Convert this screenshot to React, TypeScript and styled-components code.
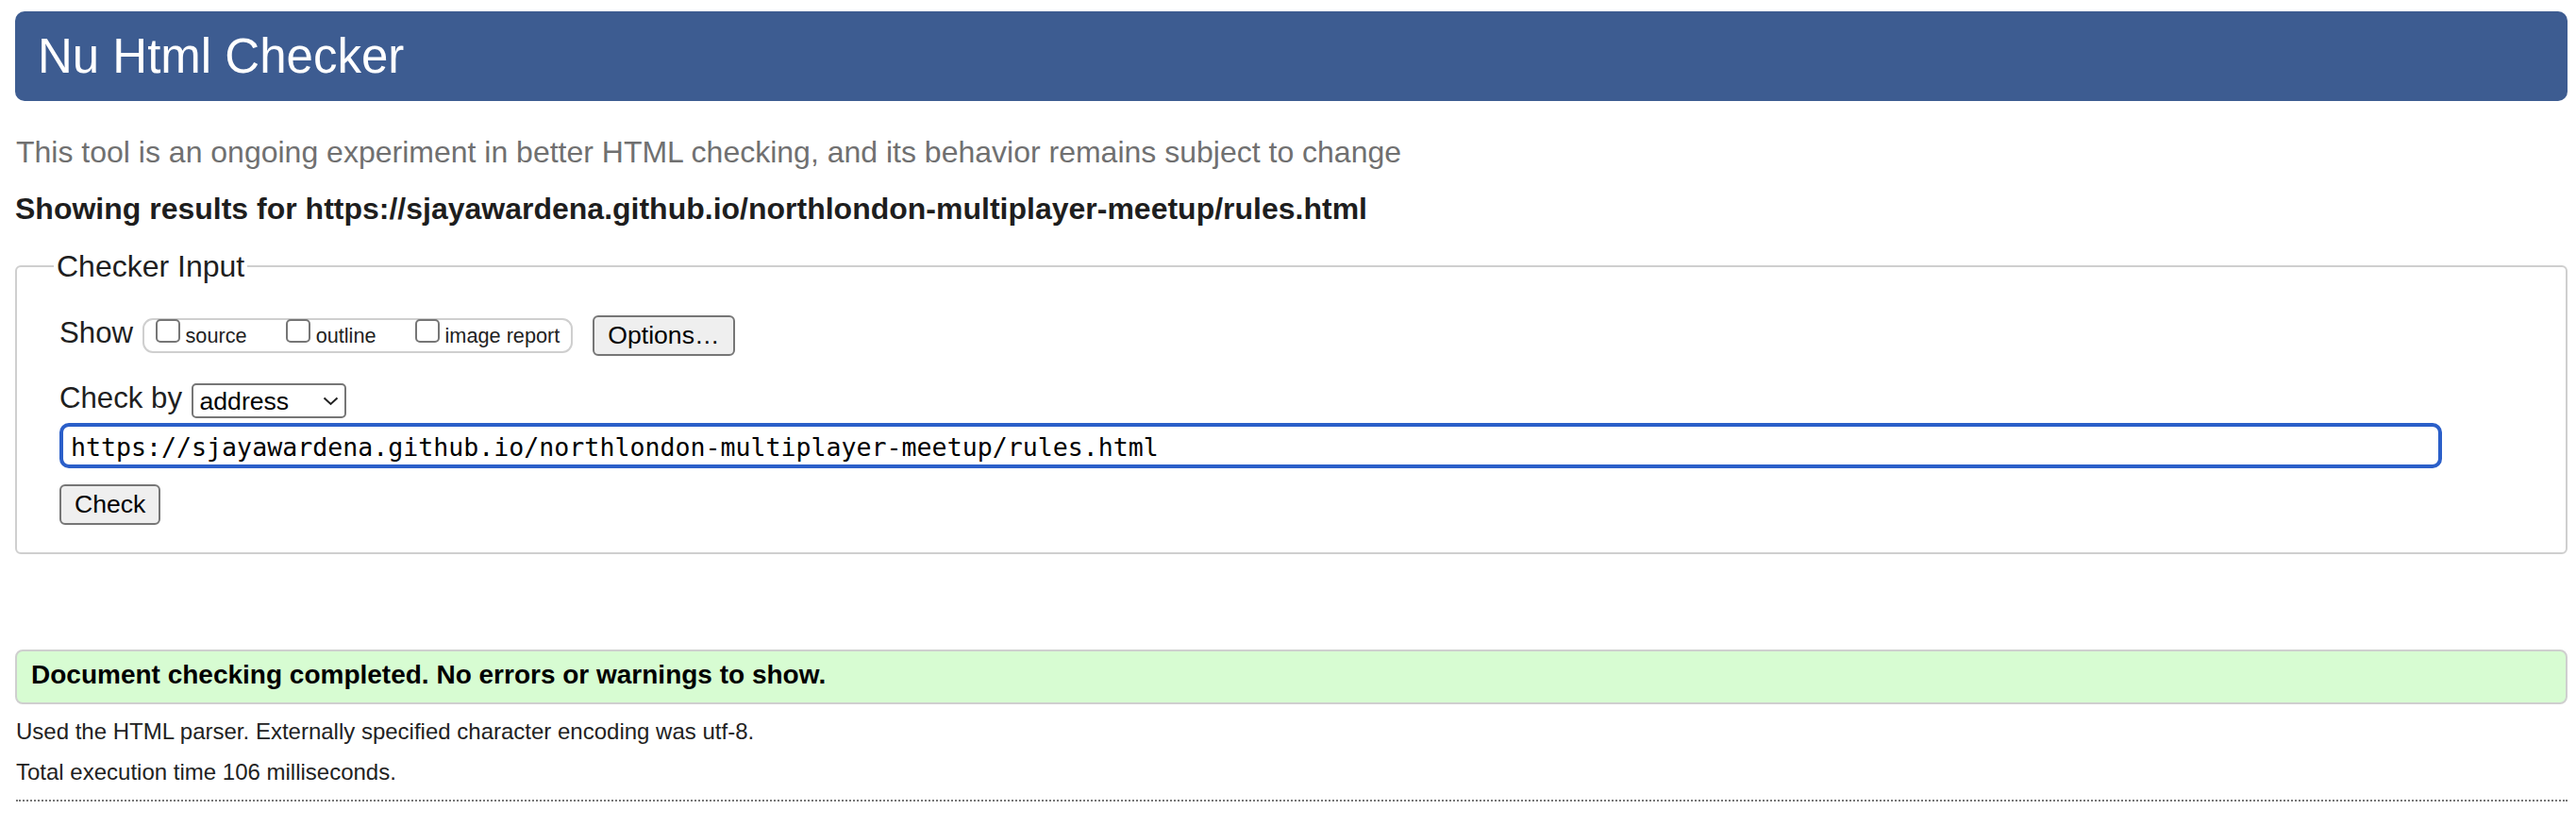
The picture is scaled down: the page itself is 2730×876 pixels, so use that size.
import React from "react";
import styled, { createGlobalStyle } from "styled-components";

const GlobalStyle = createGlobalStyle`
  html, body {
    margin: 0;
    padding: 0;
    background: #ffffff;
  }
  body {
    font-family: "Liberation Sans", Arial, Helvetica, sans-serif;
    color: #222222;
  }
`;

const Page = styled.div`
  padding: 12px 9px 0 16px;
`;

const Banner = styled.header`
  height: 95px;
  box-sizing: border-box;
  background: #3d5c91;
  border-radius: 10px;
  padding-left: 24px;
  display: flex;
  align-items: center;
`;

const Title = styled.h1`
  margin: 0;
  font-size: 51px;
  line-height: 95px;
  font-weight: 400;
  color: #ffffff;
`;

const Intro = styled.p`
  margin: 35px 0 0 1px;
  font-size: 32px;
  line-height: 38px;
  color: #707070;
`;

const ResultsFor = styled.p`
  margin: 22px 0 0 0;
  font-size: 32px;
  line-height: 38px;
  font-weight: 700;
  color: #1e1e1e;
`;

const InputFieldset = styled.fieldset`
  margin: 24px 0 0 0;
  padding: 34px 0 29px 45px;
  border: 2px solid #cfcfcf;
  border-radius: 6px;
  min-width: 0;
`;

const Legend = styled.legend`
  font-size: 32px;
  line-height: 36px;
  padding: 0 3px;
  margin-left: -6px;
  color: #1e1e1e;
`;

const Row = styled.div<{ $mt: number }>`
  display: flex;
  align-items: center;
  margin-top: ${(p) => p.$mt}px;
`;

const RowLabel = styled.span`
  font-size: 31.2px;
  line-height: 36px;
  margin-bottom: 5px;
  margin-right: 9.5px;
  color: #1f1f1f;
`;

const ToggleGroup = styled.div`
  display: flex;
  align-items: flex-end;
  gap: 41px;
  height: 37px;
  box-sizing: border-box;
  border: 2px solid #cfcfcf;
  border-radius: 11px;
  padding: 0 12px 4px 12px;
  margin-right: 21px;
`;

const Toggle = styled.label`
  display: flex;
  align-items: flex-end;
  font-size: 21.7px;
  line-height: 25px;
  color: #222222;
`;

const Box = styled.input`
  appearance: none;
  -webkit-appearance: none;
  width: 26px;
  height: 25px;
  margin: 0 6px 5px 0;
  box-sizing: border-box;
  border: 2px solid #767676;
  border-radius: 5px;
  background: #ffffff;
`;

const Button = styled.button`
  height: 43px;
  box-sizing: border-box;
  padding: 0 14px;
  border: 2px solid #767676;
  border-radius: 6px;
  background: #efefef;
  font-family: "Liberation Sans", Arial, Helvetica, sans-serif;
  font-size: 26.6px;
  color: #000000;
`;

const SelectWrap = styled.div`
  position: relative;
  width: 164px;
  height: 37px;
`;

const Select = styled.select`
  appearance: none;
  -webkit-appearance: none;
  width: 100%;
  height: 100%;
  box-sizing: border-box;
  border: 2px solid #767676;
  border-radius: 5px;
  padding: 0 0 0 7px;
  background: #ffffff;
  font-family: "Liberation Sans", Arial, Helvetica, sans-serif;
  font-size: 26.6px;
  color: #000000;
`;

const Chevron = styled.svg`
  position: absolute;
  right: 8px;
  top: 50%;
  transform: translateY(-50%);
  pointer-events: none;
`;

const UrlInput = styled.input`
  width: 2525px;
  height: 48px;
  box-sizing: border-box;
  border: 4px solid #2b5fc9;
  border-radius: 10px;
  padding: 2px 8px 0 8px;
  font-family: "DejaVu Sans Mono", "Liberation Mono", monospace;
  font-size: 26.6px;
  color: #000000;
  background: #ffffff;
  outline: none;
`;

const Success = styled.div`
  margin-top: 101px;
  border: 2px solid #cfcfcf;
  border-radius: 8px;
  background: #d7fcd2;
  padding: 8px 15px 12px 15px;
  font-size: 28px;
  line-height: 34px;
  font-weight: 700;
  color: #000000;
`;

const Detail = styled.p`
  margin: 15px 0 0 1px;
  font-size: 24px;
  line-height: 28px;
  color: #222222;
`;

const DottedRule = styled.hr`
  margin: 15px 0 0 1px;
  border: 0;
  border-top: 2px dotted #777777;
  height: 0;
`;

const url = "https://sjayawardena.github.io/northlondon-multiplayer-meetup/rules.html";

export default function App() {
  return (
    <>
      <GlobalStyle />
      <Page>
        <Banner>
          <Title>Nu Html Checker</Title>
        </Banner>
        <Intro>
          This tool is an ongoing experiment in better HTML checking, and its behavior remains subject to change
        </Intro>
        <ResultsFor>Showing results for {url}</ResultsFor>
        <InputFieldset>
          <Legend>Checker Input</Legend>
          <Row $mt={0}>
            <RowLabel>Show</RowLabel>
            <ToggleGroup>
              <Toggle>
                <Box type="checkbox" />
                source
              </Toggle>
              <Toggle>
                <Box type="checkbox" />
                outline
              </Toggle>
              <Toggle>
                <Box type="checkbox" />
                image report
              </Toggle>
            </ToggleGroup>
            <Button type="button">Options…</Button>
          </Row>
          <Row $mt={27}>
            <RowLabel>Check by</RowLabel>
            <SelectWrap>
              <Select defaultValue="address">
                <option value="address">address</option>
                <option value="file">file upload</option>
                <option value="text">text input</option>
              </Select>
              <Chevron width="17" height="10" viewBox="0 0 17 10">
                <polyline points="1.5,1.5 8.5,8 15.5,1.5" fill="none" stroke="#222" strokeWidth="2" />
              </Chevron>
            </SelectWrap>
          </Row>
          <Row $mt={3}>
            <UrlInput type="text" defaultValue={url} />
          </Row>
          <Row $mt={17}>
            <Button type="button">Check</Button>
          </Row>
        </InputFieldset>
        <Success>Document checking completed. No errors or warnings to show.</Success>
        <Detail>Used the HTML parser. Externally specified character encoding was utf-8.</Detail>
        <Detail>Total execution time 106 milliseconds.</Detail>
        <DottedRule />
      </Page>
    </>
  );
}
